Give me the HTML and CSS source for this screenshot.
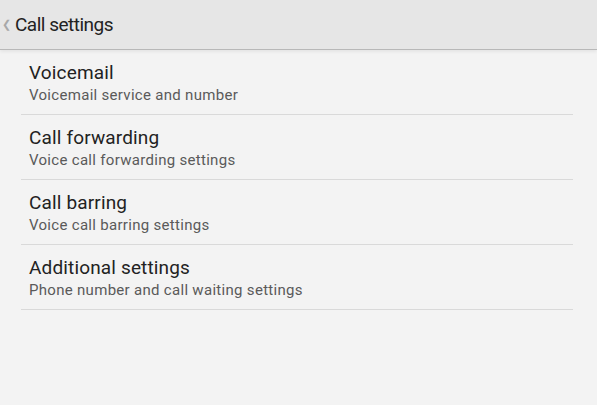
FILE: index.html
```html
<!DOCTYPE html>
<html>
<head>
    <meta charset="UTF-8">
    <meta name="viewport" content="width=device-width, initial-scale=1.0">
    <title>Call settings</title>
    <link rel="stylesheet" href="styles.css">
</head>
<body>
    <div class="action-bar">
        <span class="action-bar__back">&#10094;</span>
        <span class="action-bar__title">Call settings</span>
    </div>
    <div class="list">
        <div class="list__item">
            <div class="list__title">Voicemail</div>
            <div class="list__summary">Voicemail service and number</div>
        </div>
        <div class="list__item">
            <div class="list__title">Call forwarding</div>
            <div class="list__summary">Voice call forwarding settings</div>
        </div>
        <div class="list__item">
            <div class="list__title">Call barring</div>
            <div class="list__summary">Voice call barring settings</div>
        </div>
        <div class="list__item">
            <div class="list__title">Additional settings</div>
            <div class="list__summary">Phone number and call waiting settings</div>
        </div>
    </div>
</body>
</html>
```

FILE: styles.css
```css
*, *::before, *::after {
    box-sizing: border-box;
    font-family: 'Roboto', sans-serif;
}
html, body {
    margin: 0;
    height: 100%;
    background-color: #f3f3f3;
}
.action-bar {
    height: 50px;
    display: flex;
    align-items: center;
    background-color: #e6e6e6;
    border-bottom: 1px solid #b8b8b8;
    box-shadow: 0 2px 3px rgba(0, 0, 0, 0.06);
    position: relative;
    padding-bottom: 1px;
}
.action-bar__back {
    width: 15px;
    padding-left: 2px;
    font-size: 11px;
    color: #a8a8a8;
}
.action-bar__title {
    font-size: 19px;
    letter-spacing: -0.5px;
    color: #222;
}
.list {
    margin: 0 24px 0 21px;
}
.list__item {
    height: 65px;
    padding: 12px 8px 0 8px;
    border-bottom: 1px solid #d9d9d9;
}
.list__title {
    font-size: 19px;
    line-height: 22px;
    letter-spacing: 0.15px;
    color: #222;
}
.list__summary {
    font-size: 15px;
    line-height: 20px;
    letter-spacing: 0.3px;
    margin-top: 1px;
    color: #5a5a5a;
}
```
